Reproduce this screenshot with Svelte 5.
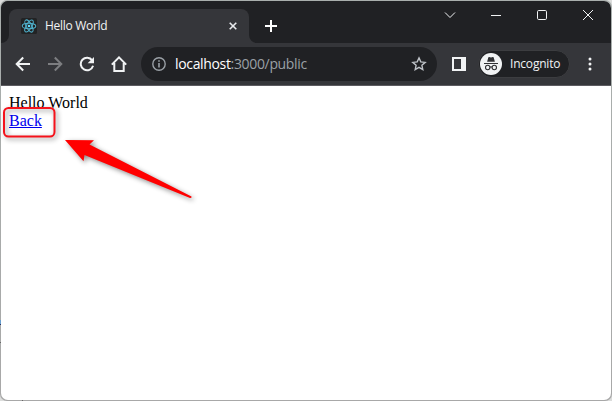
<script>
  const title = 'Hello World';
</script>

<div class="desktop">
  <div class="window">
    <header class="tabstrip">
      <div class="tab">
        <svg class="favicon" width="16" height="16" viewBox="0 0 16 16">
          <rect width="16" height="16" rx="1.5" fill="#222324" />
          <g fill="none" stroke="#4fb0cc" stroke-width="1.05">
            <ellipse cx="8" cy="8" rx="6.8" ry="2.7" />
            <ellipse cx="8" cy="8" rx="6.8" ry="2.7" transform="rotate(60 8 8)" />
            <ellipse cx="8" cy="8" rx="6.8" ry="2.7" transform="rotate(120 8 8)" />
          </g>
          <circle cx="8" cy="8" r="1.3" fill="#61dafb" />
        </svg>
        <span class="title">{title}</span>
        <svg class="close" width="8" height="8" viewBox="0 0 8 8"><path d="M.7.7l6.6 6.6M7.3.7L.7 7.3" stroke="#e8eaed" stroke-width="1.6" /></svg>
      </div>
      <svg class="flare" width="8" height="8" viewBox="0 0 8 8"><path d="M0 0a8 8 0 0 0 8 8H0z" fill="#35363a" /></svg>
      <svg class="plus" width="12" height="12" viewBox="0 0 12 12"><path d="M6 0v12M0 6h12" stroke="#fff" stroke-width="2" /></svg>
      <div class="controls">
        <svg width="12" height="12" viewBox="0 0 12 12"><path d="M1 3.5l5 5 5-5" /></svg>
        <svg width="12" height="12" viewBox="0 0 12 12"><path d="M1 6.5h10" /></svg>
        <svg width="12" height="12" viewBox="0 0 12 12"><rect x="1.5" y="1.5" width="9" height="9" rx="1.2" /></svg>
        <svg width="12" height="12" viewBox="0 0 12 12"><path d="M1 1l10 10M11 1L1 11" /></svg>
      </div>
    </header>

    <nav class="toolbar">
      <div class="nav-icons">
        <svg width="16" height="16" viewBox="0 0 16 16"><path d="M15 8H2M8.2 1.5L1.7 8l6.5 6.5" /></svg>
        <svg class="dim" width="16" height="16" viewBox="0 0 16 16"><path d="M1 8h13M7.8 1.5L14.3 8l-6.5 6.5" /></svg>
        <svg width="16" height="16" viewBox="0 0 16 16"><path d="M13.2 4.3A6.3 6.3 0 1 0 14.1 9.8" /><path d="M15 .9v6.4H8.6z" class="solid" /></svg>
        <svg width="16" height="16" viewBox="0 0 16 16"><path d="M.8 8.6L8 1.4l7.2 7.2M3.3 7v7.9h9.4V7" /></svg>
      </div>
      <div class="omnibox">
        <svg width="14" height="14" viewBox="0 0 14 14"><circle cx="7" cy="7" r="6.2" fill="none" stroke="#9aa0a6" stroke-width="1.4" /><path d="M7 3.2v1.6M7 6v4.6" stroke="#9aa0a6" stroke-width="1.6" /></svg>
        <span class="url"><b>localhost</b>:3000/public</span>
        <svg class="star" width="16" height="16" viewBox="0 0 16 16"><path d="M8 1.9l1.8 4 4.4.5-3.3 2.9.9 4.3L8 11.4l-3.8 2.2.9-4.3-3.3-2.9 4.4-.5z" fill="none" stroke="#bdc1c6" stroke-width="1.4" /></svg>
      </div>
      <svg class="panel" width="14" height="14" viewBox="0 0 14 14"><path fill="#f1f3f4" fill-rule="evenodd" d="M0 0h14v14H0zM2 2v10h7V2z" /></svg>
      <div class="incognito">
        <svg width="22" height="22" viewBox="0 0 22 22">
          <circle cx="11" cy="11" r="11" fill="#f1f3f4" />
          <path d="M7.1 8.7L8.3 4.5q.2-.7.9-.5l1.8.5 1.8-.5q.7-.2.9.5l1.2 4.2z" fill="#303134" />
          <path d="M4 10.5h14" stroke="#303134" stroke-width="1.1" />
          <g fill="none" stroke="#303134" stroke-width="1.1"><circle cx="7.7" cy="14.5" r="2.2" /><circle cx="14.3" cy="14.5" r="2.2" /><path d="M9.9 14.2q1.1-.8 2.2 0" /></g>
        </svg>
        <span>Incognito</span>
      </div>
      <svg class="menu" width="4" height="14" viewBox="0 0 4 14" fill="#f1f3f4"><circle cx="2" cy="2" r="1.5" /><circle cx="2" cy="7" r="1.5" /><circle cx="2" cy="12" r="1.5" /></svg>
    </nav>

    <main>
      <div>{title}</div>
      <a href="/">Back</a>
    </main>
  </div>

  <svg class="annotation" width="612" height="401" viewBox="0 0 612 401">
    <rect x="4" y="108" width="50.5" height="28.5" rx="4.5" fill="none" stroke="#f5121b" stroke-width="2" />
    <path d="M65 140L94 140.3 89.5 144.5 191.5 196.5Q192 198 190 198L84.5 155 83.5 161.3z" fill="#f00" />
  </svg>
  <i class="speck blue"></i><i class="speck grey"></i><i class="speck low"></i>
</div>

<style>
  :global(body) { margin: 0; overflow: hidden; background: #dcdddc; }
  .desktop {
    position: relative; box-sizing: border-box; width: 612px; height: 401px; padding: 1px;
    background: linear-gradient(#a9afad, #a8a8a8); border-radius: 7px;
  }
  .window {
    display: flex; flex-direction: column; width: 610px; height: 399px;
    overflow: hidden; border-radius: 7px; background: #fff;
    font-family: 'Open Sans', 'Noto Sans', sans-serif;
  }
  svg { display: block; flex: none; }
  .tabstrip { display: flex; height: 42px; background: linear-gradient(90deg, #35363a 8px, #202124 8px); }
  .tabstrip::before { content: ''; width: 8px; height: 42px; background: #202124; border-radius: 0 0 8px 0; flex: none; }
  .tab {
    display: flex; align-items: center; box-sizing: border-box; width: 240px; height: 34px; margin-top: 8px;
    padding: 0 12px; border-radius: 8px 8px 0 0; background: #35363a;
  }
  .title { margin-left: 8px; color: #f1f3f4; font-size: 12px; line-height: 16px; letter-spacing: -.3px; }
  .close { margin-left: auto; }
  .flare { align-self: flex-end; }
  .plus { margin: 19px 0 0 8px; }
  .controls { display: flex; gap: 34px; margin: 8px 17px 0 auto; }
  .controls path, .controls rect { fill: none; stroke: #f1f3f4; stroke-width: 1; }
  .toolbar {
    display: flex; align-items: center; box-sizing: border-box; height: 43px; padding: 0 19px 1px 14px;
    background: #35363a; border-bottom: 1px solid #5c5b60;
  }
  .nav-icons { display: flex; gap: 16px; }
  .nav-icons path { fill: none; stroke: #f1f3f4; stroke-width: 2; }
  .nav-icons .dim path { stroke: #7d7e81; }
  .nav-icons path.solid { fill: #f1f3f4; stroke: none; }
  .omnibox {
    display: flex; align-items: center; box-sizing: border-box; width: 296px; height: 34px;
    margin-left: 14px; padding: 0 10px 0 11px; border-radius: 17px; background: #202124;
  }
  .url { margin-left: 9px; color: #9aa0a6; font-size: 14px; line-height: 20px; letter-spacing: -.34px; }
  .url b { color: #fff; font-weight: 400; }
  .star { margin-left: auto; }
  .panel { margin-left: 15px; }
  .incognito {
    display: flex; align-items: center; box-sizing: border-box; width: 92px; height: 28px; margin-left: 12px;
    padding-left: 1px; border: 1px solid #3c3d40; border-radius: 14px; background: #202124;
    color: #f1f3f4; font-size: 12px; line-height: 16px;
  }
  .incognito span { margin-left: 8px; letter-spacing: -.2px; }
  .menu { margin-left: auto; }
  main { padding: 8px; color: #000; font: 16px/18px 'Liberation Serif', serif; }
  a { color: #0000ee; text-decoration: underline; }
  .annotation {
    position: absolute; left: 0; top: 0; pointer-events: none;
    filter: drop-shadow(2px 2px 2.5px rgba(0, 0, 0, .45));
  }
  .speck { position: absolute; left: 0; width: 1px; }
  .blue { top: 320px; height: 5px; background: linear-gradient(#6aa0cf 80%, #253367 80%); }
  .grey { top: 342px; height: 1px; background: #666; }
  .low { left: 22px; top: 400px; height: 1px; background: #666; }
</style>
